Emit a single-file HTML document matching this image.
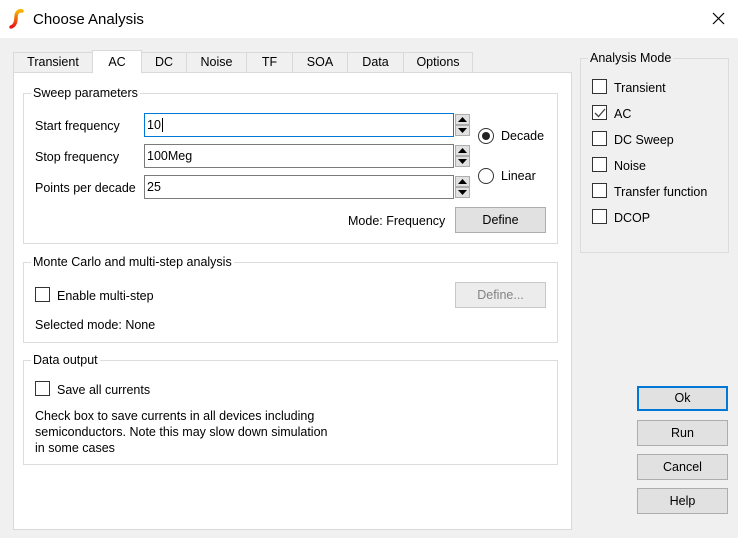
<!DOCTYPE html>
<html><head><meta charset="utf-8"><style>
*{box-sizing:border-box;margin:0;padding:0}
body{width:738px;height:538px;background:#f0f0f0;font-family:"Liberation Sans",sans-serif;font-size:12.5px;color:#000;position:relative;overflow:hidden}
.a{position:absolute;white-space:nowrap}
.title{left:0;top:0;width:738px;height:38px;background:#fff}
.tab{position:absolute;top:52px;height:21px;border:1px solid #d9d9d9;background:#f0f0f0;text-align:center;line-height:19px}
.pane{left:13px;top:72px;width:559px;height:458px;background:#fff;border:1px solid #d9d9d9}
.gb{position:absolute;border:1px solid #dcdcdc}
.gl{position:absolute;background:#fff;padding:0 2px;line-height:14px}
.inp{position:absolute;height:24px;border:1px solid #7a7a7a;background:#fff;padding-left:2px;line-height:22px}
.sp{position:absolute;width:14px;height:10px;background:#e1e1e1;border:1px solid #adadad}
.cb{position:absolute;width:15px;height:15px;border:1px solid #333;background:#fff}
.btn{position:absolute;background:#e1e1e1;border:1px solid #adadad;text-align:center}
.rad{position:absolute;width:16px;height:16px;border:1px solid #333;border-radius:50%;background:#fff}
</style></head><body>
<div class="a title"></div>
<svg class="a" style="left:8px;top:9px" width="18" height="20" viewBox="0 0 18 20"><path d="M14 2 C10 1 8 4 8 9 C8 14 6 17 3 18" stroke="url(#g)" stroke-width="3.5" fill="none" stroke-linecap="round"/><defs><linearGradient id="g" x1="0" y1="0" x2="0" y2="1"><stop offset="0" stop-color="#f7b500"/><stop offset="1" stop-color="#e8141a"/></linearGradient></defs></svg>
<div class="a" style="left:33px;top:11px;font-size:15px">Choose Analysis</div>
<svg class="a" style="left:712px;top:12px" width="13" height="13"><path d="M1 1L12 12M12 1L1 12" stroke="#000" stroke-width="1.2"/></svg>

<div class="a pane"></div>
<div class="tab" style="left:13px;width:80px">Transient</div>
<div class="tab" style="left:92px;width:50px;top:50px;height:23px;background:#fff;border-bottom:none;line-height:22px">AC</div>
<div class="tab" style="left:141px;width:46px">DC</div>
<div class="tab" style="left:186px;width:61px">Noise</div>
<div class="tab" style="left:246px;width:47px">TF</div>
<div class="tab" style="left:292px;width:56px">SOA</div>
<div class="tab" style="left:347px;width:57px">Data</div>
<div class="tab" style="left:403px;width:70px">Options</div>

<div class="gb" style="left:23px;top:93px;width:535px;height:151px"></div>
<div class="gl" style="left:31px;top:86px">Sweep parameters</div>
<div class="a" style="left:35px;top:119px">Start frequency</div>
<div class="a" style="left:35px;top:150px">Stop frequency</div>
<div class="a" style="left:35px;top:181px">Points per decade</div>
<div class="inp" style="left:144px;top:113px;width:310px;border-color:#0078d7">10<span style="border-left:1px solid #000;margin-left:1px"></span></div>
<div class="inp" style="left:144px;top:144px;width:310px">100Meg</div>
<div class="inp" style="left:144px;top:175px;width:310px">25</div>
<svg class="a" style="left:455px;top:114px" width="15" height="90">
<g fill="#e1e1e1" stroke="#adadad"><rect x="0.5" y="0.5" width="14" height="10"/><rect x="0.5" y="11.5" width="14" height="10"/><rect x="0.5" y="31.5" width="14" height="10"/><rect x="0.5" y="42.5" width="14" height="10"/><rect x="0.5" y="62.5" width="14" height="10"/><rect x="0.5" y="73.5" width="14" height="10"/></g>
<g fill="#000"><path d="M3 8L7.5 3L12 8Z"/><path d="M3 14L7.5 19L12 14Z"/><path d="M3 39L7.5 34L12 39Z"/><path d="M3 45L7.5 50L12 45Z"/><path d="M3 70L7.5 65L12 70Z"/><path d="M3 76L7.5 81L12 76Z"/></g></svg>
<div class="rad" style="left:478px;top:128px"><div style="position:absolute;left:3px;top:3px;width:8px;height:8px;border-radius:50%;background:#222"></div></div>
<div class="a" style="left:501px;top:129px">Decade</div>
<div class="rad" style="left:478px;top:168px"></div>
<div class="a" style="left:501px;top:169px">Linear</div>
<div class="a" style="left:348px;top:214px">Mode: Frequency</div>
<div class="btn" style="left:455px;top:207px;width:91px;height:26px;line-height:24px">Define</div>

<div class="gb" style="left:23px;top:262px;width:535px;height:81px"></div>
<div class="gl" style="left:31px;top:255px">Monte Carlo and multi-step analysis</div>
<div class="cb" style="left:35px;top:287px"></div>
<div class="a" style="left:57px;top:289px">Enable multi-step</div>
<div class="btn" style="left:455px;top:282px;width:91px;height:26px;line-height:24px;color:#838383;background:#ececec;border-color:#c8c8c8">Define...</div>
<div class="a" style="left:35px;top:318px">Selected mode: None</div>

<div class="gb" style="left:23px;top:360px;width:535px;height:105px"></div>
<div class="gl" style="left:31px;top:353px">Data output</div>
<div class="cb" style="left:35px;top:381px"></div>
<div class="a" style="left:57px;top:383px">Save all currents</div>
<div class="a" style="left:35px;top:408px;line-height:16px">Check box to save currents in all devices including<br>semiconductors. Note this may slow down simulation<br>in some cases</div>

<div class="gb" style="left:580px;top:58px;width:149px;height:195px"></div>
<div class="a" style="left:588px;top:51px;background:#f0f0f0;padding:0 2px;line-height:14px">Analysis Mode</div>
<div class="cb" style="left:592px;top:79px"></div><div class="a" style="left:614px;top:81px">Transient</div>
<div class="cb" style="left:592px;top:105px"></div>
<svg class="a" style="left:594px;top:108px" width="12" height="10"><path d="M1 5L4.5 8.5L11 1" stroke="#444" stroke-width="1.3" fill="none"/></svg>
<div class="a" style="left:614px;top:107px">AC</div>
<div class="cb" style="left:592px;top:131px"></div><div class="a" style="left:614px;top:133px">DC Sweep</div>
<div class="cb" style="left:592px;top:157px"></div><div class="a" style="left:614px;top:159px">Noise</div>
<div class="cb" style="left:592px;top:183px"></div><div class="a" style="left:614px;top:185px">Transfer function</div>
<div class="cb" style="left:592px;top:209px"></div><div class="a" style="left:614px;top:211px">DCOP</div>

<div class="btn" style="left:637px;top:386px;width:91px;height:25px;line-height:21px;border:2px solid #0078d7">Ok</div>
<div class="btn" style="left:637px;top:420px;width:91px;height:26px;line-height:24px">Run</div>
<div class="btn" style="left:637px;top:454px;width:91px;height:26px;line-height:24px">Cancel</div>
<div class="btn" style="left:637px;top:488px;width:91px;height:26px;line-height:24px">Help</div>
</body></html>
